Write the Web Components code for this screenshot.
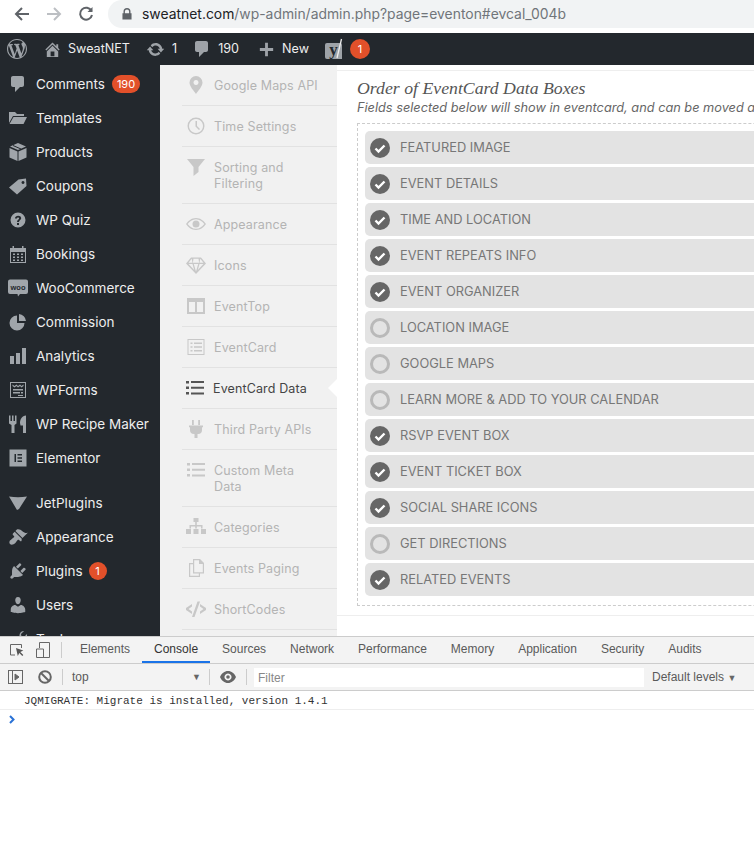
<!DOCTYPE html>
<html>
<head>
<meta charset="utf-8">
<title>SweatNET</title>
<style>
  html, body { margin: 0; height: 842px; overflow: hidden; background: #fff; }
  body { display: flex; flex-direction: column; font-family: Inter, "Liberation Sans", sans-serif; }
  .main { display: flex; height: 571px; overflow: hidden; flex: none; }
</style>
</head>
<body>
<browser-bar url-host="sweatnet.com" url-path="/wp-admin/admin.php?page=eventon#evcal_004b"></browser-bar>
<admin-bar></admin-bar>
<div class="main">
  <admin-menu>
    <menu-item icon="comment" badge="190" pill>Comments</menu-item>
    <menu-item icon="folder">Templates</menu-item>
    <menu-item icon="box">Products</menu-item>
    <menu-item icon="tag">Coupons</menu-item>
    <menu-item icon="help">WP Quiz</menu-item>
    <menu-item icon="calendar">Bookings</menu-item>
    <menu-item icon="woo">WooCommerce</menu-item>
    <menu-item icon="pie">Commission</menu-item>
    <menu-item icon="bars">Analytics</menu-item>
    <menu-item icon="forms">WPForms</menu-item>
    <menu-item icon="recipe">WP Recipe Maker</menu-item>
    <menu-item icon="elementor">Elementor</menu-item>
    <menu-item icon="jet" spaced>JetPlugins</menu-item>
    <menu-item icon="brush">Appearance</menu-item>
    <menu-item icon="plug" badge="1">Plugins</menu-item>
    <menu-item icon="users">Users</menu-item>
    <menu-item icon="wrench">Tools</menu-item>
  </admin-menu>
  <settings-nav>
    <nav-item icon="pin">Google Maps API</nav-item>
    <nav-item icon="clock">Time Settings</nav-item>
    <nav-item icon="funnel">Sorting and<br>Filtering</nav-item>
    <nav-item icon="eye">Appearance</nav-item>
    <nav-item icon="diamond">Icons</nav-item>
    <nav-item icon="columns">EventTop</nav-item>
    <nav-item icon="listbox">EventCard</nav-item>
    <nav-item icon="list" active>EventCard Data</nav-item>
    <nav-item icon="plugv">Third Party APIs</nav-item>
    <nav-item icon="list">Custom Meta<br>Data</nav-item>
    <nav-item icon="sitemap">Categories</nav-item>
    <nav-item icon="copy">Events Paging</nav-item>
    <nav-item icon="code">ShortCodes</nav-item>
  </settings-nav>
  <settings-panel heading="Order of EventCard Data Boxes" note="Fields selected below will show in eventcard, and can be moved a">
    <field-row on>Featured image</field-row>
    <field-row on>Event details</field-row>
    <field-row on>Time and location</field-row>
    <field-row on>Event repeats info</field-row>
    <field-row on>Event organizer</field-row>
    <field-row>Location image</field-row>
    <field-row>Google maps</field-row>
    <field-row>Learn more &amp; add to your calendar</field-row>
    <field-row on>RSVP event box</field-row>
    <field-row on>Event ticket box</field-row>
    <field-row on>Social share icons</field-row>
    <field-row>Get directions</field-row>
    <field-row on>Related events</field-row>
  </settings-panel>
</div>
<dev-tools></dev-tools>

<script>
"use strict";

// all icons drawn on a 20x20 box, currentColor
const ICONS = {
  wp: `<path d="M20 10c0-5.51-4.49-10-10-10C4.48 0 0 4.49 0 10c0 5.52 4.48 10 10 10 5.51 0 10-4.48 10-10zM7.78 15.37L4.37 6.22c.55-.02 1.17-.08 1.17-.08.5-.06.44-1.13-.06-1.11 0 0-1.45.11-2.37.11-.18 0-.37 0-.58-.01C4.12 2.69 6.87 1.11 10 1.11c2.33 0 4.45.87 6.05 2.34-.68-.11-1.65.39-1.65 1.58 0 .74.45 1.36.9 2.1.35.61.55 1.36.55 2.46 0 1.49-1.4 5-1.4 5l-3.03-8.37c.54-.02.82-.17.82-.17.5-.05.44-1.25-.06-1.22 0 0-1.44.12-2.38.12-.87 0-2.33-.12-2.33-.12-.5-.03-.56 1.2-.06 1.22l.92.08 1.26 3.41zM17.41 10c.24-.64.74-1.87.43-4.25.7 1.29 1.05 2.71 1.05 4.25 0 3.29-1.73 6.24-4.4 7.78.97-2.59 1.94-5.2 2.92-7.78zM6.1 18.09C3.12 16.65 1.11 13.53 1.11 10c0-1.3.23-2.48.72-3.59C3.25 10.3 4.67 14.2 6.1 18.09zm4.03-6.63l2.58 6.98c-.86.29-1.76.45-2.71.45-.79 0-1.57-.11-2.29-.33.81-2.38 1.62-4.74 2.42-7.1z"/>`,
  home: `<path d="M16 8.5l1.53 1.53-1.06 1.06L10 4.62l-6.47 6.47-1.06-1.06L10 2.5l4 4v-2h2v4zm-6-2.46l6 5.99V18H4v-5.97zM12 17v-5H8v5h4z"/>`,
  update: `<path d="M10.2 3.28c3.53 0 6.43 2.61 6.92 6h2.08l-3.5 4-3.5-4h2.32c-.45-1.97-2.21-3.45-4.32-3.45-1.45 0-2.73.71-3.54 1.78L4.95 5.66C6.23 4.2 8.11 3.28 10.2 3.28zm-.4 13.44c-3.52 0-6.43-2.61-6.92-6H.8l3.5-4c1.17 1.33 2.33 2.67 3.5 4H5.48c.45 1.97 2.21 3.45 4.32 3.45 1.45 0 2.73-.71 3.54-1.78l1.71 1.95c-1.28 1.46-3.15 2.38-5.25 2.38z"/>`,
  comment: `<path d="M5 2h9c1.1 0 2 .9 2 2v7c0 1.1-.9 2-2 2h-2l-5 5v-5H5c-1.1 0-2-.9-2-2V4c0-1.1.9-2 2-2z"/>`,
  plus: `<path d="M8.500 3h3v5.500H17v3h-5.500V17h-3v-5.500H3v-3h5.500z"/>`,
  folder: `<path d="M1 4h6l2 2h7v2H5L1 15zM5.500 9H19l-3.500 7H1.500z"/>`,
  box: `<path d="M10 1l8 3.500-8 3.500-8-3.500zM1.500 6l8 3.500V19l-8-3.500zM18.500 6v9.500l-8 3.500V9.500z"/><path d="M5 3.500l8 3.500" stroke="#23282d" stroke-width="1" fill="none"/>`,
  tag: `<path fill-rule="evenodd" d="M1 11.500L10.500 3.500l7.500-1 .5 7.500L9 18.500zM15 5a1.500 1.500 0 1 0 .01 0z"/>`,
  help: `<path fill-rule="evenodd" d="M10 2.500a7.500 7.500 0 1 1 0 15 7.500 7.500 0 0 1 0-15zM9 13v2h2v-2zM7 8.500h2c0-1.300 2.100-1.300 2.100 0 0 1.100-2.100 1.300-2.100 3.500h2c0-1.700 2.200-2 2.200-3.700C13.200 5 7 5 7 8.500z"/>`,
  calendar: `<path fill-rule="evenodd" d="M2 4h2.500V2H6v2h8V2h1.500v2H18v15H2zM3 8v10h14V8zM5 9.500h2V11H5zM9 9.500h2V11H9zM13 9.500h2V11h-2zM5 12.500h2V14H5zM9 12.500h2V14H9zM13 12.500h2V14h-2zM5 15.500h2V17H5zM9 15.500h2V17H9zM13 15.500h2V17h-2z"/>`,
  woo: `<path d="M2 1.500h16a2 2 0 0 1 2 2V14a2 2 0 0 1-2 2h-6l-2 2.500L9.500 16H2a2 2 0 0 1-2-2V3.500a2 2 0 0 1 2-2z"/><text x="10" y="11.500" text-anchor="middle" font-family="Liberation Sans, sans-serif" font-size="7.500" font-weight="700" fill="#23282d">woo</text>`,
  pie: `<path d="M9 3.500V11h7.500A7.500 7.500 0 1 1 9 3.500zM11 2a7.500 7.500 0 0 1 7 7h-7z"/>`,
  bars: `<path d="M18 18V2h-4v16h4zm-6 0V7H8v11h4zm-6 0v-8H2v8h4z"/>`,
  forms: `<path fill-rule="evenodd" d="M2 2h16v16H2zM3 3v14h14V3zM4.500 4.500l2 1.500 2-1.500L10 6l2-1.500 1.500 1.500 2-1.500V6L13.500 7.500 12 6l-2 1.500L8.500 6l-2 1.500L4.500 6zM5 9h10v1.500H5zM5 12h7v1.500H5zM13 12h2v1.500h-2zM10 15h5v1H10z"/>`,
  recipe: `<path d="M1 1.500h1.500v5.500H4V1.500h1.500V7H7V1.500h1.500v8L6.500 11v8h-3v-8L1 9.500zM12 9c0-4 2-7 6-7.500V19h-3v-7.500h-2.500z"/>`,
  elementor: `<path fill-rule="evenodd" d="M1.500 1.500h17v17h-17zM6.500 6v8H8V6zM9.500 6v1.500H14V6zM9.500 9.300v1.400H14V9.300zM9.500 12.500V14H14v-1.500z"/>`,
  jet: `<path d="M1 3.500c6 1 12 1 18 0l-8 12.500-2 1-1.500-2.500z"/>`,
  brush: `<path d="M14.480 11.060L7.410 3.990l1.500-1.500c.5-.56 2.300-.47 3.510.32 1.210.8 1.430 1.280 2.910 2.100 1.180.64 2.450 1.260 4.450.85zm-.71.71L6.700 4.700 4.930 6.470c-.39.39-.39 1.020 0 1.410l1.060 1.060c.39.39.39 1.030 0 1.420-.6.6-1.430 1.110-2.210 1.690-.35.26-.7.53-1.010.84C1.430 13.230.78 15.780 2 17s3.770.57 5.120-.78c.31-.31.58-.66.84-1.010.58-.78 1.090-1.610 1.690-2.210.39-.39 1.020-.39 1.410 0l1.060 1.060c.39.39 1.020.39 1.410 0z"/>`,
  plug: `<path d="M13.110 4.360L9.870 7.600 8 5.730l3.240-3.240c.35-.34 1.050-.2 1.560.32.52.51.66 1.210.31 1.550zm-8 1.770l.91-1.120 9.010 9.010-1.190.84c-.71.71-2.630 1.160-3.820 1.160H6.140L4.900 17.260c-.59.59-1.540.59-2.120 0-.59-.58-.59-1.530 0-2.120l1.240-1.240v-3.880c0-1.130.4-3.190 1.090-3.890zm7.260 3.970l3.240-3.240c.34-.35 1.040-.21 1.550.31.52.51.66 1.210.31 1.550l-3.240 3.250z"/>`,
  users: `<path d="M10 9.250c-2.270 0-2.730-3.440-2.730-3.440C7 4.020 7.820 2 9.970 2c2.160 0 2.980 2.020 2.710 3.810 0 0-.41 3.440-2.680 3.440zm0 2.570L12.720 10c2.390 0 4.520 2.330 4.520 4.530v2.490s-3.650 1.130-7.240 1.130c-3.650 0-7.240-1.130-7.240-1.130v-2.490c0-2.250 1.940-4.480 4.470-4.480z"/>`,
  wrench: `<path d="M16 2l-3 3 .5 2.500L16 8l3-3c.5 3-1.500 6-5 5.500L6.500 18c-1 1-3.500-1.500-2.500-2.500L11.500 8C11 4.500 13 1.500 16 2z"/>`,
  pin: `<path fill-rule="evenodd" d="M10 1a6.500 6.500 0 0 1 6.500 6.500C16.500 11.500 12 16 10 19c-2-3-6.500-7.500-6.500-11.500A6.500 6.500 0 0 1 10 1zm0 4a2.500 2.500 0 1 0 .01 0z"/>`,
  clock: `<path fill-rule="evenodd" d="M10 1.500a8.500 8.500 0 1 1 0 17 8.500 8.500 0 0 1 0-17zM10 3a7 7 0 1 0 .01 0zM9.500 5H11v5l3 3-1 1-3.500-3.500z"/>`,
  funnel: `<path d="M1 2h18l-6.500 8v5l-5 4v-9z"/>`,
  eye: `<path fill-rule="evenodd" d="M10 4c4.500 0 8 3 10 6-2 3-5.500 6-10 6S2 13 0 10c2-3 5.500-6 10-6zM10 5.200C6.500 5.200 3.500 7.500 1.700 10c1.800 2.500 4.800 4.800 8.300 4.800s6.500-2.300 8.300-4.800c-1.800-2.500-4.800-4.800-8.300-4.800zM10 6.500a3.500 3.500 0 1 1 0 7 3.500 3.500 0 0 1 0-7z"/>`,
  diamond: `<path fill-rule="evenodd" d="M5 2.500h10l5 6-10 10.500L0 8.500zM5.700 3.700L2.500 7.700h4zM14.300 3.700L13.500 7.700h4zM7.500 3.700l-.6 4h6.200l-.6-4zM2.600 9l5.600 6-1.700-6zM7.800 9l2.200 7.500L12.200 9zM13.500 9l-1.700 6 5.600-6z"/>`,
  columns: `<path fill-rule="evenodd" d="M1 2h18v16H1zM3 6v10h6V6zM11 6v10h6V6z"/>`,
  listbox: `<path fill-rule="evenodd" d="M1.500 2h17v16h-17zM2.500 3v14h15V3zM4.500 5.500h2V7h-2zM8 5.500h8V7H8zM4.500 9.300h2v1.400h-2zM8 9.300h8v1.400H8zM4.500 13h2v1.500h-2zM8 13h8v1.500H8z"/>`,
  list: `<path d="M1 3h3v2.500H1zM6 3h13v2H6zM1 8.500h3V11H1zM6 8.800h13v2H6zM1 14h3v2.500H1zM6 14.500h13v2H6z"/>`,
  plugv: `<path d="M6 1h1.800v5H6zM12.200 1H14v5h-1.800zM3 6.500h14V8l-1 .5V11a4 4 0 0 1-4 4h-.5v4h-3v-4H8a4 4 0 0 1-4-4V8.500L3 8z"/>`,
  sitemap: `<path d="M7.500 1h5v4h-1.700v3H16.500v3.500H15V9.500h-4.200v2H9.200v-2H5v2H3.500V8h5.700V5H7.500zM0 12h5v5H0zM7.500 12h5v5h-5zM15 12h5v5h-5z"/>`,
  copy: `<path fill-rule="evenodd" d="M7 1h7l4 4v10.500h-4V19H3V5h4zM8.200 2.200v12h8.600V6H13V2.200zM4.200 6.200v11.600h8.600v-2.300H7V6.200z"/>`,
  code: `<path d="M6 5v2.500L2.500 10 6 12.500V15l-6-4V9zM14 5l6 4v2l-6 4v-2.500l3.500-2.500L14 7.500zM11.500 2.500H14L8.500 18H6z"/>`,
  lock: `<path fill-rule="evenodd" d="M5 9V6.500a5 5 0 0 1 10 0V9h1.500v9h-13V9zM7 9h6V6.500a3 3 0 0 0-6 0z"/>`,
};

class UiIcon extends HTMLElement {
  connectedCallback() {
    const size = this.getAttribute("size") || 20;
    this.attachShadow({ mode: "open" }).innerHTML = `
      <style>:host { display: inline-flex; flex: none; } svg { display: block; fill: currentColor; }</style>
      <svg width="${size}" height="${size}" viewBox="0 0 20 20">${ICONS[this.getAttribute("name")] || ""}</svg>`;
  }
}
customElements.define("ui-icon", UiIcon);

const browserTemplate = document.createElement("template");
browserTemplate.innerHTML = `
  <style>
    :host { display: flex; align-items: flex-start; height: 33px; background: #fff; box-sizing: border-box; flex: none; overflow: hidden; }
    .btn { width: 32px; height: 28px; display: flex; align-items: center; justify-content: center; flex: none; color: #5f6368; }
    .btn.off { color: #bcbfc3; }
    .first { margin-left: 6px; }
    .pill { margin-left: 6px; flex: 1; height: 28px; background: #f1f3f4; border-radius: 14px 0 0 14px; display: flex; align-items: center; padding-left: 12px; font: 13.9px/28px Inter, "Liberation Sans", sans-serif; color: #70757a; white-space: nowrap; overflow: hidden; }
    .pill ui-icon { color: #5f6368; margin-right: 8px; }
    b { font-weight: 400; color: #202124; }
  </style>
  <div class="btn first"><svg width="16" height="16" viewBox="0 0 16 16" fill="none" stroke="currentColor" stroke-width="2"><path d="M15 8H2M8 2L2 8l6 6"/></svg></div>
  <div class="btn off"><svg width="16" height="16" viewBox="0 0 16 16" fill="none" stroke="currentColor" stroke-width="2"><path d="M1 8h13M8 2l6 6-6 6"/></svg></div>
  <div class="btn"><svg width="16" height="16" viewBox="0 0 16 16" fill="none" stroke="currentColor" stroke-width="2"><path d="M13.500 5A6 6 0 1 0 14 9"/><path d="M14.500 1v5h-5" fill="currentColor" stroke="none"/></svg></div>
  <div class="pill"><ui-icon name="lock" size="14"></ui-icon><span><b></b><i style="font-style:normal"></i></span></div>
`;
class BrowserBar extends HTMLElement {
  connectedCallback() {
    const root = this.attachShadow({ mode: "open" });
    root.appendChild(browserTemplate.content.cloneNode(true));
    root.querySelector("b").textContent = this.getAttribute("url-host");
    root.querySelector("i").textContent = this.getAttribute("url-path");
  }
}
customElements.define("browser-bar", BrowserBar);

const adminBarTemplate = document.createElement("template");
adminBarTemplate.innerHTML = `
  <style>
    :host { display: flex; align-items: center; height: 32px; background: #23282d; color: #eee; font: 12.6px/32px Inter, "Liberation Sans", sans-serif; flex: none; padding-left: 7px; overflow: hidden; }
    ui-icon { color: #9ea3a8; }
    .wp { margin-right: 16px; }
    .item { display: flex; align-items: center; white-space: nowrap; }
    .yoast { width: 22px; height: 22px; display: block; margin-left: 15px; }
    .badge { width: 20px; height: 20px; border-radius: 50%; background: #e2502a; color: #fff; font-size: 11px; line-height: 20px; text-align: center; margin-left: 4px; }
  </style>
  <ui-icon class="wp" name="wp" size="20"></ui-icon>
  <div class="item" style="gap:6px"><ui-icon name="home" size="19"></ui-icon>SweatNET</div>
  <div class="item" style="gap:7px;margin-left:16px"><ui-icon name="update" size="19"></ui-icon>1</div>
  <div class="item" style="gap:6px;margin-left:15px"><ui-icon name="comment" size="20"></ui-icon>190</div>
  <div class="item" style="gap:6px;margin-left:18px"><ui-icon name="plus" size="19"></ui-icon>New</div>
  <svg class="yoast" viewBox="0 0 22 22"><path fill="#9ea3a8" d="M3 5h13a2 2 0 0 1 2 2v14H3a2 2 0 0 1-2-2V7a2 2 0 0 1 2-2z"/><text x="9.500" y="17" text-anchor="middle" font-family="Liberation Serif, serif" font-weight="700" font-size="17" fill="#23282d">y</text><path d="M17.500 1L13 20" stroke="#eee" stroke-width="1.300" fill="none"/></svg>
  <span class="badge">1</span>
`;
class AdminBar extends HTMLElement {
  connectedCallback() {
    this.attachShadow({ mode: "open" }).appendChild(adminBarTemplate.content.cloneNode(true));
  }
}
customElements.define("admin-bar", AdminBar);

class AdminMenu extends HTMLElement {
  connectedCallback() {
    this.attachShadow({ mode: "open" }).innerHTML = `
      <style>:host { display: block; width: 160px; flex: none; background: #23282d; padding-top: 2px; box-sizing: border-box; overflow: hidden; }</style>
      <slot></slot>`;
  }
}
customElements.define("admin-menu", AdminMenu);

class MenuItem extends HTMLElement {
  connectedCallback() {
    const badge = this.getAttribute("badge");
    const pill = this.hasAttribute("pill");
    this.attachShadow({ mode: "open" }).innerHTML = `
      <style>
        :host { display: flex; align-items: center; height: 34px; color: #eee; font: 13.5px/34px Inter, "Liberation Sans", sans-serif; white-space: nowrap; padding-left: 8px; }
        :host([spaced]) { margin-top: 11px; }
        ui-icon { color: #a0a5aa; margin-right: 8px; }
        .badge { margin-left: ${pill ? 7 : 6}px; height: 18px; min-width: 18px; box-sizing: border-box; padding: 0 ${pill ? 5 : 0}px; border-radius: 9px; background: #e2502a; color: #fff; font-size: 11px; line-height: 18px; text-align: center; }
      </style>
      <ui-icon name="${this.getAttribute("icon")}" size="20"></ui-icon><slot></slot>${badge ? `<span class="badge">${badge}</span>` : ""}`;
  }
}
customElements.define("menu-item", MenuItem);

class SettingsNav extends HTMLElement {
  connectedCallback() {
    this.attachShadow({ mode: "open" }).innerHTML = `
      <style>:host { display: block; width: 177px; flex: none; background: #f1f1f1; padding-left: 22px; box-sizing: border-box; }</style>
      <slot></slot>`;
  }
}
customElements.define("settings-nav", SettingsNav);

class NavItem extends HTMLElement {
  connectedCallback() {
    const active = this.hasAttribute("active");
    this.attachShadow({ mode: "open" }).innerHTML = `
      <style>
        :host { display: flex; align-items: flex-start; position: relative; padding: 13px 0 11px; border-bottom: 1px solid #e2e2e2; color: #b4b4b4; font: 12.5px/16px Inter, "Liberation Sans", sans-serif; letter-spacing: .13px; }
        :host([active]) { color: #444; }
        ui-icon { width: 32px; padding-left: 4px; box-sizing: border-box; color: #c8c8c8; margin: -3px 0 -1px; }
        :host([active]) ui-icon { width: 31px; padding-left: 3px; color: #555; }
        .arrow { position: absolute; right: 0; top: 11px; width: 0; height: 0; border: 9px solid transparent; border-right-color: #fff; border-left: 0; }
      </style>
      <ui-icon name="${this.getAttribute("icon")}" size="20"></ui-icon><span><slot></slot></span>${active ? `<span class="arrow"></span>` : ""}`;
  }
}
customElements.define("nav-item", NavItem);

class SettingsPanel extends HTMLElement {
  connectedCallback() {
    this.attachShadow({ mode: "open" }).innerHTML = `
      <style>
        :host { display: block; flex: 1; min-width: 0; overflow: hidden; background: #fff; padding: 5px 0 0 20px; white-space: nowrap; }
        .wrap { width: 560px; }
        :host::before { content: ""; display: block; height: 1px; background: #eee; margin: 0 0 6px -20px; }
        h3 { margin: 0; font: italic 400 17.75px/22px "Liberation Serif", serif; color: #555; }
        p { margin: 0 0 7px; font: italic 12.75px/17px Inter, "Liberation Sans", sans-serif; color: #666; }
        .box { border: 1px dashed #ccc; padding: 7px 7px 9px; display: flex; flex-direction: column; gap: 3px; }
        .rule { height: 1px; background: #eee; margin: 9px 0 0 -20px; width: 600px; }
      </style>
      <div class="wrap">
        <h3>${this.getAttribute("heading")}</h3>
        <p>${this.getAttribute("note")}</p>
        <div class="box"><slot></slot></div>
        <div class="rule"></div>
      </div>`;
  }
}
customElements.define("settings-panel", SettingsPanel);

class FieldRow extends HTMLElement {
  connectedCallback() {
    const on = this.hasAttribute("on");
    const mark = on
      ? `<svg width="20" height="20" viewBox="0 0 20 20"><circle cx="10" cy="10" r="10" fill="#666"/><path d="M5.500 10.500l3 3 6-6" fill="none" stroke="#fff" stroke-width="2.400"/></svg>`
      : `<svg width="20" height="20" viewBox="0 0 20 20"><circle cx="10" cy="10" r="8.500" fill="none" stroke="#b9b9b9" stroke-width="3"/></svg>`;
    this.attachShadow({ mode: "open" }).innerHTML = `
      <style>
        :host { display: flex; align-items: center; height: 33px; background: #e3e3e3; border-radius: 5px; padding-left: 5px; gap: 10px; color: #777; font: 12.85px/33px Inter, "Liberation Sans", sans-serif; text-transform: uppercase; }
        svg { display: block; flex: none; }
      </style>
      ${mark}<span><slot></slot></span>`;
  }
}
customElements.define("field-row", FieldRow);

const devTemplate = document.createElement("template");
devTemplate.innerHTML = `
  <style>
    :host { display: block; flex: 1; background: #fff; font: 12px/16px "Liberation Sans", sans-serif; color: #5a5a5a; }
    .tabs { display: flex; align-items: stretch; height: 28px; box-sizing: border-box; background: #f3f3f3; border-top: 1px solid #ccc; border-bottom: 1px solid #ccc; }
    .tabs svg, .tools svg { display: block; flex: none; align-self: center; }
    .tab { padding: 0 12px; line-height: 25px; white-space: nowrap; color: #5a5a5a; }
    .tab.on { color: #333; box-shadow: inset 0 -2px 0 #1a73e8; }
    .sep { width: 1px; height: 16px; background: #ccc; align-self: center; flex: none; }
    .tools { display: flex; height: 27px; box-sizing: border-box; background: #f3f3f3; border-bottom: 1px solid #ccc; align-items: center; }
    .ctx { width: 137px; display: flex; justify-content: space-between; padding-right: 8px; box-sizing: border-box; }
    .tri { font-size: 9px; color: #666; }
    .filter { width: 390px; height: 19px; background: #fff; margin-left: 7px; padding-left: 4px; box-sizing: border-box; line-height: 20px; color: #888; }
    .levels { margin-left: 8px; white-space: nowrap; }
    .log { height: 19px; box-sizing: border-box; border-bottom: 1px solid #eee; padding-left: 24px; font: 11px/20px "Liberation Mono", monospace; color: #333; }
    .prompt { padding: 5px 0 0 9px; }
  </style>
  <div class="tabs">
    <svg style="margin-left:9px" width="16" height="16" viewBox="0 0 16 16" fill="none" stroke="#666" stroke-width="1"><path d="M6 13H1.500V2.500h11V6"/><path d="M7 6l1.800 8 1.500-3 3 3 1-1-3-3 3-1.500z" fill="#555" stroke="none"/></svg>
    <svg style="margin-left:10px" width="16" height="18" viewBox="0 0 16 18" fill="none" stroke="#666" stroke-width="1"><path d="M4.500 7V1.500h10v15h-9M1.500 8h7v8.500h-7z"/></svg>
    <span class="sep" style="margin:0 6px 0 10px"></span>
    <span class="tab">Elements</span>
    <span class="tab on">Console</span>
    <span class="tab">Sources</span>
    <span class="tab">Network</span>
    <span class="tab">Performance</span>
    <span class="tab">Memory</span>
    <span class="tab">Application</span>
    <span class="tab">Security</span>
    <span class="tab">Audits</span>
  </div>
  <div class="tools">
    <svg style="margin-left:8px" width="15" height="14" viewBox="0 0 15 14" fill="none" stroke="#666"><rect x=".5" y=".5" width="14" height="13"/><path d="M4.500 1v12"/><path d="M7 4l4 3-4 3z" fill="#666"/></svg>
    <svg style="margin-left:15px" width="14" height="14" viewBox="0 0 14 14" fill="none" stroke="#666" stroke-width="2"><circle cx="7" cy="7" r="5.800"/><path d="M3 3l8 8"/></svg>
    <span class="sep" style="margin:0 9px 0 10px"></span>
    <span class="ctx">top<span class="tri">▼</span></span>
    <span class="sep"></span>
    <svg style="margin:0 10px" width="16" height="12" viewBox="0 0 16 12"><path fill="#666" fill-rule="evenodd" d="M8 0c3.500 0 6.500 2.500 8 6-1.500 3.500-4.500 6-8 6s-6.500-2.500-8-6c1.500-3.500 4.500-6 8-6zM8 2.500a3.500 3.500 0 1 0 .01 0zM8 4.200a1.800 1.800 0 1 1 0 3.600 1.800 1.800 0 0 1 0-3.600z"/></svg>
    <span class="sep"></span>
    <span class="filter">Filter</span>
    <span class="levels">Default levels <span class="tri">▼</span></span>
  </div>
  <div class="log">JQMIGRATE: Migrate is installed, version 1.4.1</div>
  <div class="prompt"><svg style="display:block" width="7" height="9" viewBox="0 0 7 9" fill="none" stroke="#2a72d6" stroke-width="2"><path d="M1 1l3.500 3.500L1 8"/></svg></div>
`;
class DevTools extends HTMLElement {
  connectedCallback() {
    this.attachShadow({ mode: "open" }).appendChild(devTemplate.content.cloneNode(true));
  }
}
customElements.define("dev-tools", DevTools);
</script>
</body>
</html>
